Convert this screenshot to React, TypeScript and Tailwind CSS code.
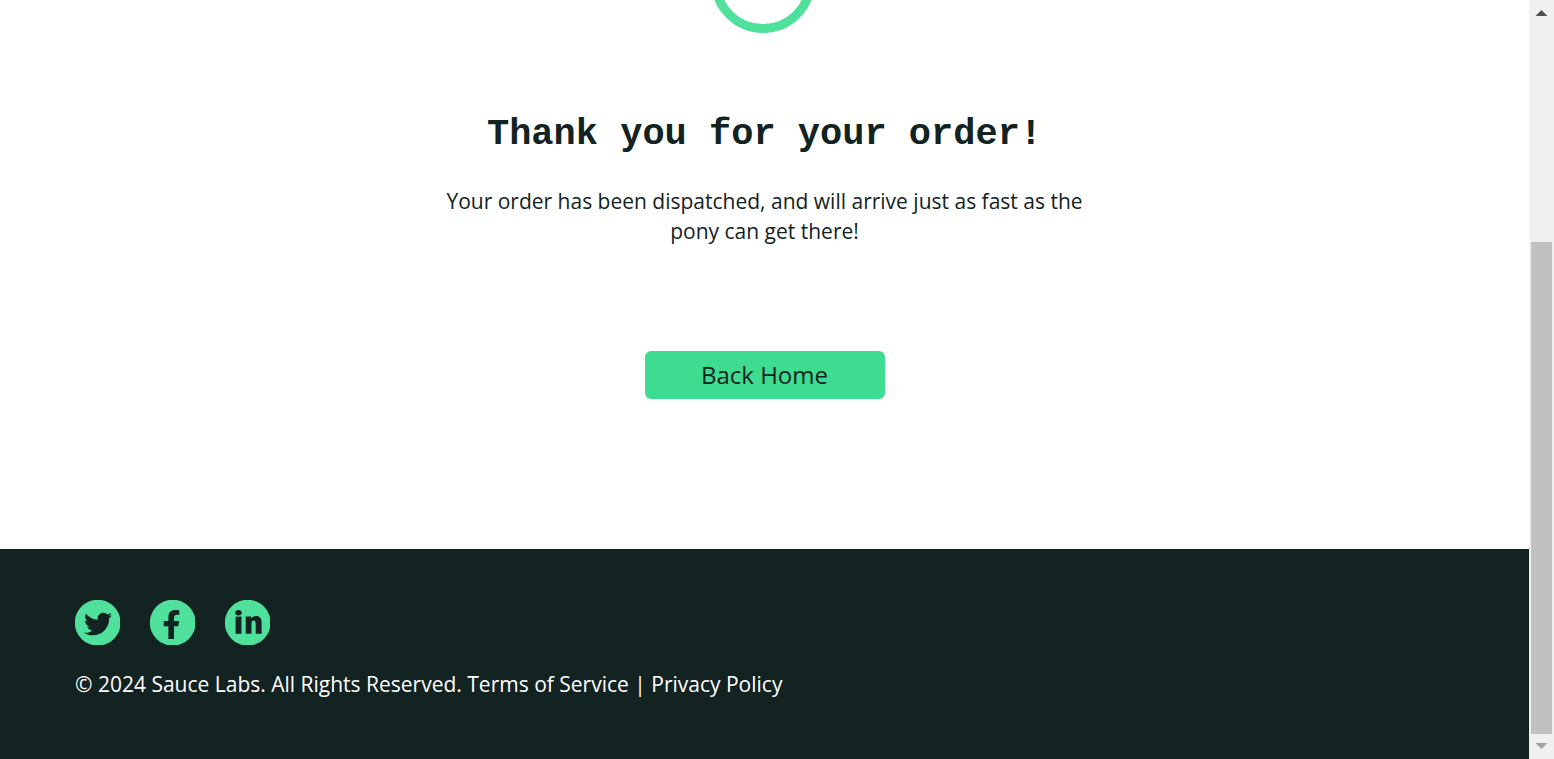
import type { ReactNode } from "react";
import { FaFacebookF, FaTwitter } from "react-icons/fa";

function SocialLink({ href, label, children }: { href: string; label: string; children: ReactNode }) {
  return (
    <li>
      <a href={href} aria-label={label} className="block">
        <svg viewBox="0 0 45 45" className="block size-[45px] text-[#132322]" aria-hidden="true">
          <circle cx="22.7" cy="22.7" r="22.9" fill="#4fe19b" />
          {children}
        </svg>
      </a>
    </li>
  );
}

function ScrollTrack() {
  return (
    <div className="flex w-[25px] shrink-0 flex-col items-center bg-[#f0f0f0]" aria-hidden="true">
      <svg viewBox="0 0 25 25" className="size-[25px] shrink-0">
        <path d="M6.5 16 12.5 10 18.5 16Z" fill="#505050" />
      </svg>
      <div className="flex min-h-0 w-[21px] grow flex-col">
        <div className="grow-[217]" />
        <div className="grow-[492] bg-[#c1c1c1]" />
      </div>
      <svg viewBox="0 0 25 25" className="size-[25px] shrink-0">
        <path d="M6.5 9H18.5L12.5 15Z" fill="#a3a3a3" />
      </svg>
    </div>
  );
}

export default function App() {
  return (
    <div className="flex h-screen bg-white font-['Open_Sans',sans-serif] text-[#132322]">
      <div className="flex min-w-0 grow flex-col overflow-hidden">
        <main className="flex grow flex-col items-center">
          <div className="flex h-[33px] items-end overflow-hidden">
            <svg viewBox="0 0 104 104" className="mr-1 size-[104px] shrink-0" role="img" aria-label="Order complete">
              <circle cx="52" cy="52" r="47.5" fill="none" stroke="#4fe19b" strokeWidth="9" />
              <path d="M30 48 46 62 75 34" fill="none" stroke="#4fe19b" strokeWidth="9" />
            </svg>
          </div>
          <h1 className="mt-[77px] text-center font-['Liberation_Mono',monospace] text-[37px] leading-[48px] font-bold">
            Thank you for your order!
          </h1>
          <p className="mt-7 max-w-[680px] px-4 text-center text-[21px] leading-[30px]">
            Your order has been dispatched, and will arrive just as fast as the pony can get there!
          </p>
          <button
            type="button"
            className="mt-[105px] h-12 w-[240px] cursor-pointer rounded-md bg-[#3ddc91] text-2xl font-medium"
          >
            Back Home
          </button>
        </main>
        <footer className="h-[210px] shrink-0 bg-[#132322] px-[75px] pt-[51px] text-white">
          <ul className="flex gap-[30px]">
            <SocialLink href="#twitter" label="Twitter">
              <FaTwitter x={9} y={10} size={28} />
            </SocialLink>
            <SocialLink href="#facebook" label="Facebook">
              <FaFacebookF x={7} y={10} size={29} />
            </SocialLink>
            <SocialLink href="#linkedin" label="LinkedIn">
              <g fill="currentColor">
                <ellipse cx="13.5" cy="12.8" rx="3.2" ry="2.7" />
                <path d="M10.6 16.6h5.9v17.2h-5.900Z" />
                <path d="M20.700 16.600h5.500v2c1-1.500 2.700-2.500 4.900-2.500 3.900 0 5.500 2.400 5.500 6.500v11.200h-5.900V23.500c0-1.900-.6-3-2-3-1.500 0-2.200 1.100-2.200 3v10.300h-5.800Z" />
              </g>
            </SocialLink>
          </ul>
          <p className="mt-6 text-[21px] leading-[30px]">
            © 2024 Sauce Labs. All Rights Reserved. Terms of Service | Privacy Policy
          </p>
        </footer>
      </div>
      <ScrollTrack />
    </div>
  );
}
